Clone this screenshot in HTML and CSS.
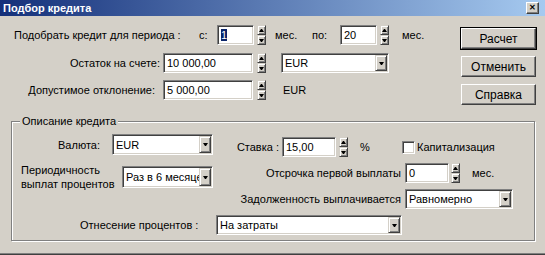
FILE: index.html
```html
<!DOCTYPE html>
<html lang="ru">
<head>
  <meta charset="UTF-8">
  <title>Подбор кредита</title>
  <link rel="stylesheet" href="styles.css">
</head>
<body>
  <div class="window">
    <div class="titlebar">
      <span class="title">Подбор кредита</span>
      <span class="close">&#x2715;</span>
    </div>

    <div class="top">
      <div class="params">
        <div class="row row-period">
          <span class="lbl lbl-period">Подобрать кредит для периода :</span>
          <span class="lbl lbl-from">с:</span>
          <span class="field w37"><span class="v"><span class="sel">1</span></span></span>
          <span class="spin"><i class="up"></i><i class="down"></i></span>
          <span class="lbl unit-from">мес.</span>
          <span class="lbl lbl-to">по:</span>
          <span class="field w37"><span class="v">20</span></span>
          <span class="spin"><i class="up"></i><i class="down"></i></span>
          <span class="lbl unit-to">мес.</span>
        </div>

        <div class="row row-balance">
          <span class="lbl lbl-right lbl-balance">Остаток на счете:</span>
          <span class="field w90"><span class="v">10 000,00</span></span>
          <span class="spin spin-gap"><i class="up"></i><i class="down"></i></span>
          <span class="field combo combo-cur"><span class="v">EUR</span><span class="drop"></span></span>
        </div>

        <div class="row row-dev">
          <span class="lbl lbl-right lbl-dev">Допустимое отклонение:</span>
          <span class="field w90"><span class="v">5 000,00</span></span>
          <span class="spin spin-gap"><i class="up"></i><i class="down"></i></span>
          <span class="lbl cur-text">EUR</span>
        </div>
      </div>

      <div class="buttons">
        <div class="btn default">Расчет</div>
        <div class="btn">Отменить</div>
        <div class="btn">Справка</div>
      </div>
    </div>

    <div class="group">
      <span class="group-title">Описание кредита</span>

      <div class="group-main">
        <div class="col-left">
          <div class="row row-valuta">
            <span class="lbl lbl-right lbl-valuta">Валюта:</span>
            <span class="field combo combo-valuta"><span class="v">EUR</span><span class="drop"></span></span>
          </div>
          <div class="row row-freq">
            <span class="lbl lbl-freq">Периодичность<br>выплат процентов</span>
            <span class="field combo combo-freq"><span class="v">Раз в 6 месяце</span><span class="drop"></span></span>
          </div>
        </div>

        <div class="col-right">
          <div class="row row-rate">
            <span class="lbl lbl-right lbl-rate">Ставка :</span>
            <span class="field w54"><span class="v">15,00</span></span>
            <span class="spin"><i class="up"></i><i class="down"></i></span>
            <span class="lbl pct">%</span>
            <span class="check"></span>
            <span class="lbl check-text">Капитализация</span>
          </div>
          <div class="row row-delay">
            <span class="lbl lbl-right lbl-wide">Отсрочка первой выплаты</span>
            <span class="field w44"><span class="v">0</span></span>
            <span class="spin spin-near"><i class="up"></i><i class="down"></i></span>
            <span class="lbl unit-delay">мес.</span>
          </div>
          <div class="row row-debt">
            <span class="lbl lbl-right lbl-wide">Задолженность выплачивается</span>
            <span class="field combo combo-debt"><span class="v">Равномерно</span><span class="drop"></span></span>
          </div>
        </div>
      </div>

      <div class="row row-assign">
        <span class="lbl lbl-assign">Отнесение процентов :</span>
        <span class="field combo combo-assign"><span class="v">На затраты</span><span class="drop"></span></span>
      </div>
    </div>
  </div>
</body>
</html>
```

FILE: styles.css
```css
* {
box-sizing: border-box;
}

body {
margin: 0;
background-color: #d4d0c8;
font-family: "Liberation Sans", Arial, sans-serif;
font-size: 11px;
color: #000;
}

.window {
width: 545px;
height: 255px;
border-bottom: 1px solid #404040;
box-shadow: inset 0 -1px #808080;
}

/* title bar */
.titlebar {
height: 16px;
background: linear-gradient(to right, #14307a, #a6caf0);
display: flex;
align-items: center;
justify-content: space-between;
padding: 0 6px 0 3px;
}

.title {
color: #fff;
font-weight: bold;
font-size: 11px;
}

.close {
width: 13px;
height: 12px;
background-color: #d4d0c8;
border: 1px solid;
border-color: #fff #404040 #404040 #fff;
box-shadow: inset -1px -1px #808080;
font-size: 8px;
font-weight: bold;
line-height: 10px;
text-align: center;
}

/* common controls */
.row {
display: flex;
align-items: center;
height: 20px;
}

.lbl {
white-space: nowrap;
}

.lbl-right {
text-align: right;
}

.field {
height: 20px;
background-color: #fff;
border: 1px solid;
border-color: #808080 #fff #fff #808080;
box-shadow: inset 1px 1px #404040, inset -1px -1px #d4d0c8;
padding: 1px;
display: flex;
align-items: center;
flex-shrink: 0;
}

.field .v {
flex: 1;
padding-left: 2px;
overflow: hidden;
white-space: nowrap;
}

.sel {
background-color: #0a246a;
color: #fff;
padding: 2px 0;
}

.drop {
width: 12px;
align-self: stretch;
background-color: #d4d0c8;
border: 1px solid;
border-color: #d4d0c8 #404040 #404040 #d4d0c8;
box-shadow: inset 1px 1px #fff, inset -1px -1px #808080;
display: flex;
align-items: center;
justify-content: center;
}

.drop::after {
content: "";
width: 1px;
border-left: 2px solid transparent;
border-right: 2px solid transparent;
border-top: 3px solid #000;
}

.spin {
width: 9px;
height: 20px;
margin-left: 3px;
display: flex;
flex-direction: column;
flex-shrink: 0;
}

.spin i {
flex: 1;
background-color: #d4d0c8;
border: 1px solid;
border-color: #d4d0c8 #404040 #404040 #d4d0c8;
box-shadow: inset 1px 1px #fff, inset -1px -1px #808080;
display: flex;
align-items: center;
justify-content: center;
}

.spin i::after {
content: "";
width: 1px;
border-left: 2px solid transparent;
border-right: 2px solid transparent;
}

.spin .up::after {
border-bottom: 3px solid #000;
}

.spin .down::after {
border-top: 3px solid #000;
}

.check {
width: 13px;
height: 13px;
background-color: #fff;
border: 1px solid;
border-color: #808080 #fff #fff #808080;
box-shadow: inset 1px 1px #404040, inset -1px -1px #d4d0c8;
flex-shrink: 0;
}

.w37 { width: 37px; }
.w44 { width: 44px; }
.w54 { width: 54px; }
.w90 { width: 90px; }

/* top part */
.top {
height: 105px;
display: flex;
}

.params {
width: 461px;
padding-top: 9px;
}

.row-period {
padding-left: 14px;
}

.lbl-period { width: 185px; }
.lbl-from { width: 18px; }
.unit-from { margin-left: 9px; width: 37px; }
.lbl-to { width: 28px; }
.unit-to { margin-left: 13px; }

.row-balance {
margin-top: 8px;
}

.lbl-balance {
width: 160px;
margin-right: 3px;
}

.spin-gap {
margin-left: 4px;
}

.combo-cur {
width: 108px;
margin-left: 15px;
}

.row-dev {
margin-top: 7px;
}

.lbl-dev {
width: 155px;
margin-right: 8px;
}

.cur-text {
margin-left: 17px;
}

.buttons {
padding-top: 12px;
display: flex;
flex-direction: column;
gap: 7px;
}

.btn {
width: 75px;
height: 21px;
border: 1px solid;
border-color: #fff #404040 #404040 #fff;
box-shadow: inset -1px -1px #808080, inset 1px 1px #d4d0c8;
display: flex;
align-items: center;
justify-content: center;
font-size: 12px;
}

.btn.default {
outline: 1px solid #000;
}

/* group box */
.group {
position: relative;
margin-left: 11px;
width: 524px;
height: 120px;
border: 1px solid #808080;
box-shadow: 1px 1px #fff, inset 1px 1px #fff;
}

.group-title {
position: absolute;
top: -7px;
left: 8px;
padding: 0 2px;
line-height: 13px;
background-color: #d4d0c8;
}

.group-main {
display: flex;
align-items: flex-start;
}

.col-left {
width: 210px;
}

.row-valuta {
margin-top: 12px;
height: 21px;
}

.lbl-valuta {
width: 88px;
margin-right: 12px;
}

.combo-valuta {
width: 101px;
height: 21px;
}

.row-freq {
margin-top: 11px;
height: 22px;
}

.lbl-freq {
width: 110px;
padding-left: 9px;
line-height: 14px;
}

.combo-freq {
width: 91px;
height: 22px;
}

.row-rate {
margin-top: 15px;
}

.lbl-rate {
width: 57px;
margin-right: 3px;
}

.pct {
width: 54px;
padding-left: 12px;
}

.check-text {
margin-left: 2px;
}

.row-delay,
.row-debt {
margin-top: 6px;
}

.lbl-wide {
width: 179px;
margin-right: 4px;
}

.spin-near {
margin-left: 2px;
}

.unit-delay {
margin-left: 12px;
}

.combo-debt {
width: 108px;
}

.row-assign {
margin-top: 6px;
}

.lbl-assign {
width: 204px;
padding-left: 68px;
}

.combo-assign {
width: 186px;
}
```
